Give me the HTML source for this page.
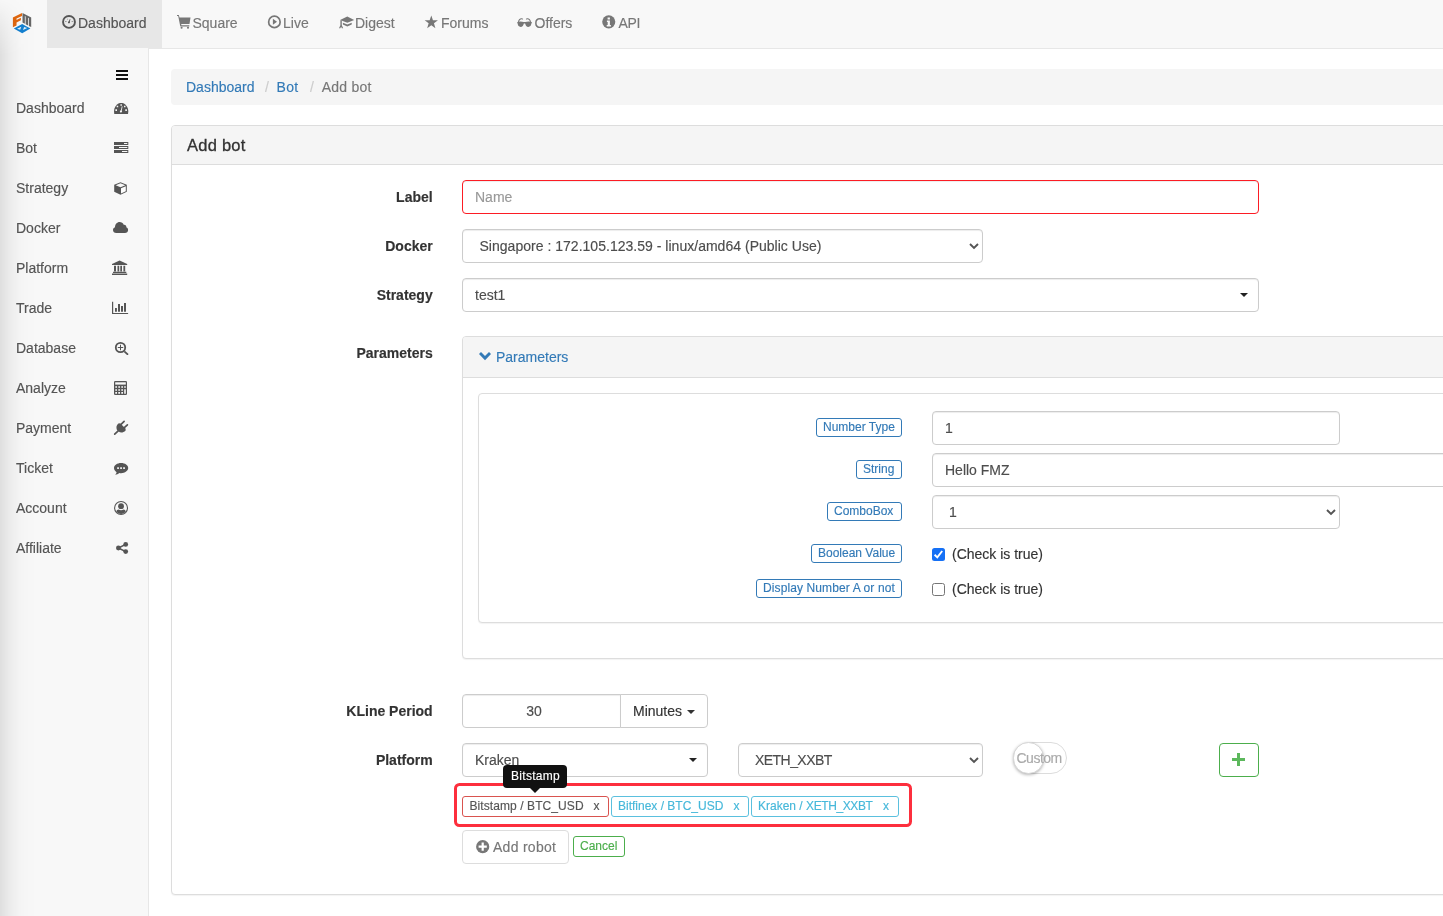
<!DOCTYPE html>
<html lang="en">
<head>
<meta charset="utf-8">
<title>Add bot</title>
<style>
*{box-sizing:border-box}
html,body{margin:0;padding:0}
body{width:1443px;height:916px;overflow:hidden;background:#fff;font-family:"Liberation Sans",sans-serif;font-size:14px;line-height:20px;color:#333;position:relative;-webkit-text-stroke:.15px}
.abs,.t,.b,.lbl,.ctl,.tag,.sitem,.nitem{position:absolute}
.t{white-space:nowrap;line-height:20px;height:20px}
svg{position:absolute;overflow:visible}
a{color:#337ab7;text-decoration:none}
#wrap{position:absolute;left:0;top:0;width:1443px;height:916px;overflow:hidden;will-change:transform}
#nav{left:0;top:0;width:1443px;height:49px;background:#f8f8f8;border-bottom:1px solid #e7e7e7}
#act{left:47px;top:0;width:115px;height:48px;background:#e7e7e7}
.nitem{top:13px;height:20px;line-height:20px;color:#777;white-space:nowrap}
#side{left:0;top:49px;width:149px;height:867px;background:#f8f8f8;border-right:1px solid #e7e7e7}
#sidetop{left:0;top:48px;width:148px;height:1px;background:#f8f8f8}
#shadow{left:0;top:0;width:40px;height:916px;background:linear-gradient(to right,rgba(0,0,0,.10) 0,rgba(0,0,0,.075) 5px,rgba(0,0,0,.048) 10px,rgba(0,0,0,.03) 15px,rgba(0,0,0,.016) 20px,rgba(0,0,0,.008) 25px,rgba(0,0,0,.003) 30px,rgba(0,0,0,0) 38px);-webkit-mask-image:linear-gradient(to bottom,rgba(0,0,0,.05) 0,rgba(0,0,0,.55) 25px,#000 55px);mask-image:linear-gradient(to bottom,rgba(0,0,0,.05) 0,rgba(0,0,0,.55) 25px,#000 55px)}
.sitem{left:16px;height:20px;line-height:20px;color:#555;white-space:nowrap}
#bc{left:171px;top:69px;width:1300px;height:36px;background:#f5f5f5;border-radius:4px}
#panel{left:171px;top:125px;width:1300px;height:770px;border:1px solid #ddd;border-radius:4px;background:#fff;box-shadow:0 1px 1px rgba(0,0,0,.05)}
#phead{left:172px;top:126px;width:1290px;height:39px;background:#f5f5f5;border-bottom:1px solid #ddd;border-radius:3px 0 0 0}
.f{color:#4d4d4d}
.lbl{font-weight:bold;text-align:right;width:230px;left:202.700px;height:20px;line-height:20px;white-space:nowrap}
.ctl{height:34px;border:1px solid #ccc;border-radius:4px;background:#fff;box-shadow:inset 0 1px 1px rgba(0,0,0,.075)}
.tag{height:19px;border:1px solid #337ab7;border-radius:3px;background:#fff}
.tg{position:absolute;font-size:12px;line-height:17px;height:17px;white-space:nowrap;color:#337ab7}
.cb{position:absolute;width:13px;height:13px;border-radius:2.5px}
</style>
</head>
<body>
<div id="wrap">
<div id="nav" class="abs"></div><div id="act" class="abs"></div>
<!-- logo -->
<svg style="left:0;top:0" width="47" height="48" viewBox="0 0 47 48">
 <g transform="matrix(9.1,-4.5,0,9.700,12.900,17.500)" fill="#e0670f">
  <path d="M0 0H1V.3H.4V.44H.88V.69H.4V1H0Z"/>
 </g>
 <g transform="matrix(8.700,4.500,0,9.700,22.500,12.900)" fill="#666">
  <path d="M0 0H1V1H.73V.2H.64V1H.36V.2H.27V1H0Z"/>
 </g>
 <path d="M13.800 28.500L22.200 23.900L30.400 28.500L22.200 33.300Z" fill="#1480d0"/>
 <path d="M17 28.700L21.300 26.700L20.200 29.700Z M27.200 28.100L23 30.100L24.100 27.100Z" fill="#e4eff8"/>
</svg>
<!-- Dashboard (active) -->
<svg style="left:62px;top:15px" width="14" height="14" viewBox="0 0 14 14"><circle cx="7" cy="6.9" r="5.95" fill="none" stroke="#555" stroke-width="1.9"/><path d="M6.2 7.6L7.9 3.9L8.4 4.1L7.6 7.9Z" fill="#555"/><circle cx="6.9" cy="7.4" r="0.9" fill="#555"/><path d="M3 6.3H4.6V6.900H3Z M9.6 6.3H11.2V6.900H9.6Z M5 3.9L5.5 3.6L6 4.5L5.5 4.8Z" fill="#555" opacity=".7"/></svg>
<div class="nitem" style="left:78px;color:#555">Dashboard</div>
<!-- Square -->
<svg style="left:177px;top:15px" width="14" height="14" viewBox="0 0 14 14" fill="#777"><path d="M0 0H1.800L2.500 2.400H13.500L12.500 9H4.200L4.400 10.300H12.300V11.500H3.300L1.200 1H0Z"/><circle cx="4.600" cy="12.800" r="1.050"/><circle cx="11" cy="12.800" r="1.050"/></svg>
<div class="nitem" style="left:192.500px">Square</div>
<!-- Live -->
<svg style="left:267px;top:15px" width="15" height="14" viewBox="0 0 15 14"><circle cx="7.400" cy="6.900" r="5.750" fill="none" stroke="#777" stroke-width="1.700"/><path d="M5.900 3.800L10 6.800L5.900 9.700Z" fill="#777"/></svg>
<div class="nitem" style="left:283px">Live</div>
<!-- Digest -->
<svg style="left:338.600px;top:15.200px" width="16" height="14" viewBox="0 0 16 14" fill="#777"><path d="M8.300 1.600L15.200 5.100L8.300 7.800L1.100 5.100Z"/><path d="M3.900 7.700L8.300 9.500L12.700 7.700V9.500L8.300 11.400L3.900 9.500Z"/><path d="M1.400 5.200H2.800V10.200L4.200 13.200H2.900L2.100 11.800L1.300 13.200H0L1.400 10.200Z"/></svg>
<div class="nitem" style="left:355px">Digest</div>
<!-- Forums -->
<svg style="left:424px;top:15px" width="15" height="14" viewBox="0 0 15 14" fill="#777"><path d="M7.300 .5L8.950 5.230L13.960 5.340L9.960 8.370L11.410 13.160L7.300 10.300L3.190 13.160L4.640 8.370L.640 5.340L5.650 5.230Z"/></svg>
<div class="nitem" style="left:441px">Forums</div>
<!-- Offers -->
<svg style="left:517px;top:15px" width="15" height="14" viewBox="0 0 15 14" fill="#777"><path d="M.3 7C2.300 6.300 4.800 6.300 6.600 7.100C7.200 6.900 7.800 6.900 8.400 7.100C10.200 6.300 12.700 6.300 14.800 7V8.200L14.300 8.600C14.200 10.700 13 11.900 11.400 11.900C9.600 11.900 8.500 10.600 8.300 8.700C7.900 8.300 7.100 8.300 6.700 8.700C6.500 10.600 5.400 11.900 3.600 11.900C2 11.900 .8 10.700 .7 8.600L.3 8.200Z"/><path d="M1 7C1.200 4.600 2.900 3.100 4.800 3.300C5.400 3.400 5.800 3.600 6.200 4L5.600 4.700C4.300 3.700 2.400 4.700 2.100 7Z M14 7C13.800 4.600 12.100 3.100 10.200 3.300C9.600 3.400 9.200 3.600 8.800 4L9.400 4.700C10.700 3.700 12.600 4.700 12.900 7Z"/></svg>
<div class="nitem" style="left:534.500px">Offers</div>
<!-- API -->
<svg style="left:602px;top:15px" width="14" height="14" viewBox="0 0 14 14"><circle cx="6.750" cy="6.850" r="6.550" fill="#777"/><path d="M5.600 2.400H7.900V4.400H5.600Z M4.900 5.600H7.900V10H8.900V11.400H4.700V10H5.700V7H4.900Z" fill="#f8f8f8"/></svg>
<div class="nitem" style="left:618.500px;letter-spacing:-.3px">API</div>

<div id="side" class="abs"></div><div id="sidetop" class="abs"></div>
<svg style="left:116px;top:70px" width="12" height="10" viewBox="0 0 12 10" fill="#111"><path d="M0 0H12V2.1H0Z M0 4H12V6.1H0Z M0 8H12V10.1H0Z"/></svg>
<div class="sitem" style="top:98px">Dashboard</div>
<svg style="left:114px;top:103px" width="15" height="11" viewBox="0 0 15 11"><path d="M.3 10.9C-.6 7.6.4 3.6 3.2 1.5C5.8-.4 9.2-.4 11.800000000000001 1.5C14.6 3.6 15.6 7.6 14.7 10.9C14.6 11 14.5 11 14.4 11H.6C.5 11 .4 11 .3 10.900000000000002Z" transform="scale(.955 1)" fill="#555"/><path d="M1.400 6.300H3V7.900H1.400Z M11.300 6.300H12.900V7.900H11.300Z M2.700 2.800H4.200V4.300H2.700Z M10 2.800H11.500V4.300H10Z M6.400 1.300H7.900V2.800H6.400Z" fill="#f8f8f8"/><path d="M7.800 3.300L8.600 3.500L7.700 7.500C8.300 8.200 8.100 9.300 7.100 9.500C6.200 9.600 5.600 8.700 6 7.900C6.200 7.500 6.500 7.300 6.900 7.300Z" fill="#f8f8f8"/></svg>
<div class="sitem" style="top:138px">Bot</div>
<svg style="left:114px;top:142px" width="15" height="11" viewBox="0 0 15 11"><path d="M0 0H14.300V3H0Z M0 4H14.300V7H0Z M0 8H14.300V11H0Z" fill="#555"/><path d="M10 1H13.300V2H10Z M5 5H13.300V6H5Z M8 9H13.300V10H8Z" fill="#f8f8f8"/></svg>
<div class="sitem" style="top:178px">Strategy</div>
<svg style="left:114px;top:182px" width="13" height="13" viewBox="0 0 13 13"><path d="M6.500 .2L12.800 2.800V9.800L6.500 12.800L.2 9.800V2.800Z" fill="#555"/><path d="M6.500 1.300L11.300 3.200L6.500 5.200L1.700 3.200Z" fill="#f8f8f8"/><path d="M7 6.200L11.800 4.200V9.200L7 11.500Z" fill="#fdfdfd"/></svg>
<div class="sitem" style="top:218px">Docker</div>
<svg style="left:113px;top:222px" width="15" height="11" viewBox="0 0 15 11"><path d="M3.300 11C1.400 11 0 9.700 0 8C0 6.700 .8 5.600 2 5.200C2 2.300 4 0 6.600 0C8.500 0 10 1.100 10.700 2.700C12.300 2.400 13.600 3.700 13.300 5.300C14.400 5.800 15.100 6.800 15.100 8C15.100 9.700 13.700 11 12 11Z" fill="#555"/></svg>
<div class="sitem" style="top:258px">Platform</div>
<svg style="left:112px;top:260px" width="16" height="15" viewBox="0 0 16 15" fill="#555"><path d="M7.600 .6L15.200 4V5H0V4Z"/><path d="M2 5.800H4V11.600H2Z M5.500 5.800H7.200V11.600H5.500Z M8.300 5.800H10V11.600H8.300Z M11.400 5.800H13.200V11.600H11.400Z"/><path d="M1 11.800H14.300V13H1Z M0 13.600H15.200V15H0Z"/></svg>
<div class="sitem" style="top:298px">Trade</div>
<svg style="left:112px;top:301px" width="17" height="13" viewBox="0 0 17 13" fill="#555"><path d="M0 .8H1.200V11.900H16.100V13H0Z"/><path d="M3 7H4.900V10.800H3Z M6 3H8V10.800H6Z M9 5H11V10.800H9Z M12 2H14V10.800H12Z"/></svg>
<div class="sitem" style="top:338px">Database</div>
<svg style="left:114px;top:341px" width="15" height="15" viewBox="0 0 15 15"><circle cx="6.500" cy="6.500" r="4.700" fill="none" stroke="#555" stroke-width="1.800"/><path d="M9.700 10.900L10.900 9.700L14.300 12.700C14.700 13.500 13.700 14.300 13 13.900Z" fill="#555"/><path d="M6 3.800H7V6H9.200V7H7V9.200H6V7H3.800V6H6Z" fill="#555"/></svg>
<div class="sitem" style="top:378px">Analyze</div>
<svg style="left:114px;top:381px" width="13" height="14" viewBox="0 0 13 14"><rect x="0" y="0" width="13" height="14" rx="1.300" fill="#555"/><path d="M1.200 1.300H11.800V3.600H1.200Z" fill="#f8f8f8"/><path d="M1.300 5.200H3V6.800H1.300Z M4.300 5.200H6V6.800H4.300Z M7.300 5.200H9V6.800H7.300Z M10.200 5.200H11.800V6.800H10.200Z M1.300 8.200H3V9.800H1.300Z M4.300 8.200H6V9.800H4.300Z M7.300 8.200H9V9.800H7.300Z M1.300 11.100H3V12.700H1.300Z M4.300 11.100H6V12.700H4.300Z M7.300 11.100H9V12.700H7.300Z M10.200 8.200H11.800V12.700H10.200Z" fill="#f8f8f8"/></svg>
<div class="sitem" style="top:418px">Payment</div>
<svg style="left:114px;top:421px" width="15" height="14" viewBox="0 0 15 14"><path d="M4.300 2.500L6.200 2.300L11.700 7.800L11.500 9.700C6 14.800 -1 7.600 4.300 2.500Z" fill="#555"/><path d="M7.300 3.100L10.100 .400M10.600 6.400L13.400 3.800M4.200 9.900L.700 13.200" stroke="#555" stroke-width="1.700" stroke-linecap="round" fill="none"/></svg>
<div class="sitem" style="top:458px">Ticket</div>
<svg style="left:114px;top:463px" width="15" height="12" viewBox="0 0 15 12"><path d="M7.100 0C11 0 14.200 2.300 14.200 5.100C14.200 7.900 11 10.200 7.100 10.200C6.400 10.200 5.800 10.100 5.200 10C4.200 11 2.800 11.600 1.200 11.800C2 11.100 2.500 10.300 2.600 9.300C1 8.300 0 6.800 0 5.100C0 2.300 3.200 0 7.100 0Z" fill="#555"/><path d="M3.200 4.300H4.900V6H3.200Z M6.200 4.300H7.900V6H6.200Z M9.200 4.300H10.900V6H9.200Z" fill="#f8f8f8"/></svg>
<div class="sitem" style="top:498px">Account</div>
<svg style="left:114px;top:501px" width="15" height="14" viewBox="0 0 15 14"><circle cx="7.050" cy="7" r="6.450" fill="#f8f8f8" stroke="#555" stroke-width="1.100"/><circle cx="7.050" cy="5.200" r="2.900" fill="#555"/><path d="M2.300 10.600C2.600 9.300 3.400 8.700 4.600 8.600C6 9.500 8.100 9.500 9.500 8.600C10.700 8.700 11.500 9.300 11.800 10.600C10.700 12.200 9 13 7.050 13C5.100 13 3.400 12.200 2.300 10.600Z" fill="#555"/></svg>
<div class="sitem" style="top:538px">Affiliate</div>
<svg style="left:116px;top:542px" width="13" height="12" viewBox="0 0 13 12"><circle cx="2.400" cy="6" r="2.400" fill="#555"/><circle cx="9.700" cy="2.400" r="2.400" fill="#555"/><circle cx="9.700" cy="9.600" r="2.400" fill="#555"/><path d="M2.400 6L9.700 2.400M2.400 6L9.700 9.600" stroke="#555" stroke-width="1.500" fill="none"/></svg>

<div id="shadow" class="abs"></div>
<div id="bc" class="abs"></div>
<a class="t" style="left:186px;top:77px">Dashboard</a><span class="t" style="left:265px;top:77px;color:#ccc">/</span><a class="t" style="left:276.500px;top:77px;letter-spacing:.3px">Bot</a><span class="t" style="left:310px;top:77px;color:#ccc">/</span><span class="t" style="left:321.700px;top:77px;color:#777;letter-spacing:.25px">Add bot</span>
<div id="panel" class="abs"></div>
<div id="phead" class="abs"></div>
<div class="t" style="left:187px;top:136px;font-size:16.500px;line-height:18px;height:18px;-webkit-text-stroke:.3px #333;letter-spacing:.25px">Add bot</div>

<!-- Label -->
<div class="lbl" style="top:187px">Label</div>
<div class="ctl" style="left:462px;top:180px;width:797px;border-color:#fc1c24"></div>
<div class="t" style="left:475px;top:187px;color:#999">Name</div>
<!-- Docker -->
<div class="lbl" style="top:236px">Docker</div>
<div class="ctl" style="left:462px;top:229px;width:521px"></div>
<div class="t f" style="left:479.500px;top:236px;letter-spacing:.02px">Singapore : 172.105.123.59 - linux/amd64 (Public Use)</div>
<svg style="left:969px;top:243px" width="10" height="7" viewBox="0 0 10 7"><path d="M1 1L5 5L9 1" fill="none" stroke="#555" stroke-width="1.9"/></svg>
<!-- Strategy -->
<div class="lbl" style="top:285px">Strategy</div>
<div class="ctl" style="left:462px;top:278px;width:797px"></div>
<div class="t f" style="left:475px;top:285px">test1</div>
<svg style="left:1240px;top:293px" width="8" height="4" viewBox="0 0 8 4"><path d="M0 0H8L4 4Z" fill="#222"/></svg>
<!-- Parameters -->
<div class="lbl" style="top:343px">Parameters</div>
<div class="abs" style="left:462px;top:336px;width:1000px;height:323px;border:1px solid #ddd;border-radius:4px;background:#fff;box-shadow:0 1px 1px rgba(0,0,0,.05)"></div>
<div class="abs" style="left:463px;top:337px;width:990px;height:41px;background:#f5f5f5;border-bottom:1px solid #ddd;border-radius:3px 0 0 0"></div>
<svg style="left:479px;top:352px" width="12" height="9" viewBox="0 0 12 9"><path d="M0 2L2 0L6 4L10 0L12 2L6 8.2Z" fill="#337ab7"/></svg>
<a class="t" style="left:496px;top:347px">Parameters</a>
<div class="abs" style="left:478px;top:393px;width:990px;height:230px;border:1px solid #ddd;border-radius:4px;background:#fff;box-shadow:0 1px 1px rgba(0,0,0,.05)"></div>

<div class="tag" style="left:816px;top:418px;width:86px"></div><span class="tg" style="left:823px;top:419px">Number Type</span>
<div class="ctl" style="left:932px;top:411px;width:408px"></div><div class="t f" style="left:945px;top:418px">1</div>
<div class="tag" style="left:856px;top:460px;width:46px"></div><span class="tg" style="left:863px;top:461px">String</span>
<div class="ctl" style="left:932px;top:453px;width:560px"></div><div class="t f" style="left:945px;top:460px">Hello FMZ</div>
<div class="tag" style="left:827px;top:502px;width:75px"></div><span class="tg" style="left:834px;top:503px">ComboBox</span>
<div class="ctl" style="left:932px;top:495px;width:408px"></div><div class="t f" style="left:949px;top:502px">1</div>
<svg style="left:1326px;top:509px" width="10" height="7" viewBox="0 0 10 7"><path d="M1 1L5 5L9 1" fill="none" stroke="#555" stroke-width="1.9"/></svg>
<div class="tag" style="left:811px;top:544px;width:91px"></div><span class="tg" style="left:818px;top:545px">Boolean Value</span>
<div class="cb" style="left:932px;top:548px;background:#1570f5"></div>
<svg style="left:932px;top:548px" width="13" height="13" viewBox="0 0 13 13"><path d="M2.600 6.800L5.300 9.400L10.200 3" fill="none" stroke="#fff" stroke-width="1.9" stroke-linecap="butt"/></svg>
<div class="t" style="left:952px;top:544px">(Check is true)</div>
<div class="tag" style="left:756px;top:579px;width:146px"></div><span class="tg" style="left:763px;top:580px;letter-spacing:.11px">Display Number A or not</span>
<div class="cb" style="left:932px;top:583px;background:#fff;border:1px solid #767676"></div>
<div class="t" style="left:952px;top:579px">(Check is true)</div>

<!-- KLine -->
<div class="lbl" style="top:701px">KLine Period</div>
<div class="ctl" style="left:462px;top:694px;width:159px;border-radius:4px 0 0 4px"></div>
<div class="t f" style="left:494px;top:701px;width:80px;text-align:center">30</div>
<div class="ctl" style="left:620px;top:694px;width:88px;border-radius:0 4px 4px 0;box-shadow:none"></div>
<div class="t" style="left:633px;top:701px">Minutes</div>
<svg style="left:687px;top:710px" width="8" height="4" viewBox="0 0 8 4"><path d="M0 0H8L4 4Z" fill="#333"/></svg>
<!-- Platform -->
<div class="lbl" style="top:750px">Platform</div>
<div class="ctl" style="left:462px;top:743px;width:246px"></div>
<div class="t f" style="left:475px;top:750px">Kraken</div>
<svg style="left:689px;top:758px" width="8" height="4" viewBox="0 0 8 4"><path d="M0 0H8L4 4Z" fill="#222"/></svg>
<div class="ctl" style="left:738px;top:743px;width:245px"></div>
<div class="t f" style="left:755px;top:750px;letter-spacing:-.55px">XETH_XXBT</div>
<svg style="left:969px;top:757px" width="10" height="7" viewBox="0 0 10 7"><path d="M1 1L5 5L9 1" fill="none" stroke="#555" stroke-width="1.9"/></svg>
<!-- switch -->
<div class="abs" style="left:1013px;top:742px;width:54px;height:31.500px;border:1px solid #dcdcdc;border-radius:16px;background:#fff"></div>
<div class="abs" style="left:1013px;top:742px;width:31px;height:31.500px;border-radius:16px;background:#fff;border:1px solid #d8d8d8;box-shadow:0 1px 3px rgba(0,0,0,.28)"></div>
<div class="t" style="left:1016.500px;top:748px;color:#aaa;letter-spacing:-.5px">Custom</div>
<!-- plus -->
<div class="abs" style="left:1219px;top:743px;width:40px;height:34px;border:1px solid #4cae4c;border-radius:4px;background:#fff"></div>
<svg style="left:1232px;top:753px" width="13" height="13" viewBox="0 0 13 13"><path d="M5 0H8V5H13V8H8V13H5V8H0V5H5Z" fill="#5cb85c"/></svg>
<!-- selected platforms -->
<div class="abs" style="left:454px;top:783px;width:458px;height:44px;border:3px solid #fd2f3d;border-radius:5.500px"></div>
<div class="tag" style="left:462px;top:796px;width:147px;height:21px;border-color:#d9534f"></div>
<span class="tg" style="left:469.500px;top:798px;color:#555;letter-spacing:.08px">Bitstamp / BTC_USD</span><span class="tg" style="left:593.5px;top:798px;color:#555">x</span>
<div class="tag" style="left:611px;top:796px;width:138px;height:21px;border-color:#5bc0de"></div>
<span class="tg" style="left:618px;top:798px;color:#46b8da">Bitfinex / BTC_USD</span><span class="tg" style="left:733.5px;top:798px;color:#46b8da">x</span>
<div class="tag" style="left:751px;top:796px;width:148px;height:21px;border-color:#5bc0de"></div>
<span class="tg" style="left:758px;top:798px;color:#46b8da">Kraken / <span style="letter-spacing:-.4px">XETH_XXBT</span></span><span class="tg" style="left:883px;top:798px;color:#46b8da">x</span>
<!-- tooltip -->
<div class="abs" style="left:503px;top:765px;width:64px;height:23px;background:#111;border-radius:4px"></div>
<svg style="left:530px;top:788px" width="10" height="5" viewBox="0 0 10 5"><path d="M0 0H10L5 5Z" fill="#111"/></svg>
<span class="tg" style="left:511px;top:768px;color:#fff;letter-spacing:.3px">Bitstamp</span>
<!-- buttons -->
<div class="abs" style="left:462px;top:830px;width:107px;height:34px;border:1px solid #ddd;border-radius:4px;background:#fff"></div>
<svg style="left:476px;top:840px" width="14" height="14" viewBox="0 0 14 14"><circle cx="6.7" cy="6.7" r="6.6" fill="#777"/><path d="M5.6 2.6H7.8V5.6H10.8V7.8H7.8V10.8H5.6V7.8H2.6V5.6H5.6Z" fill="#fff"/></svg>
<div class="t" style="left:493px;top:837px;color:#777;letter-spacing:.28px">Add robot</div>
<div class="abs" style="left:573px;top:836px;width:52px;height:21px;border:1px solid #4cae4c;border-radius:3px;background:#fff"></div>
<span class="tg" style="left:580px;top:838px;color:#4cae4c">Cancel</span>

</div>
</body>
</html>
